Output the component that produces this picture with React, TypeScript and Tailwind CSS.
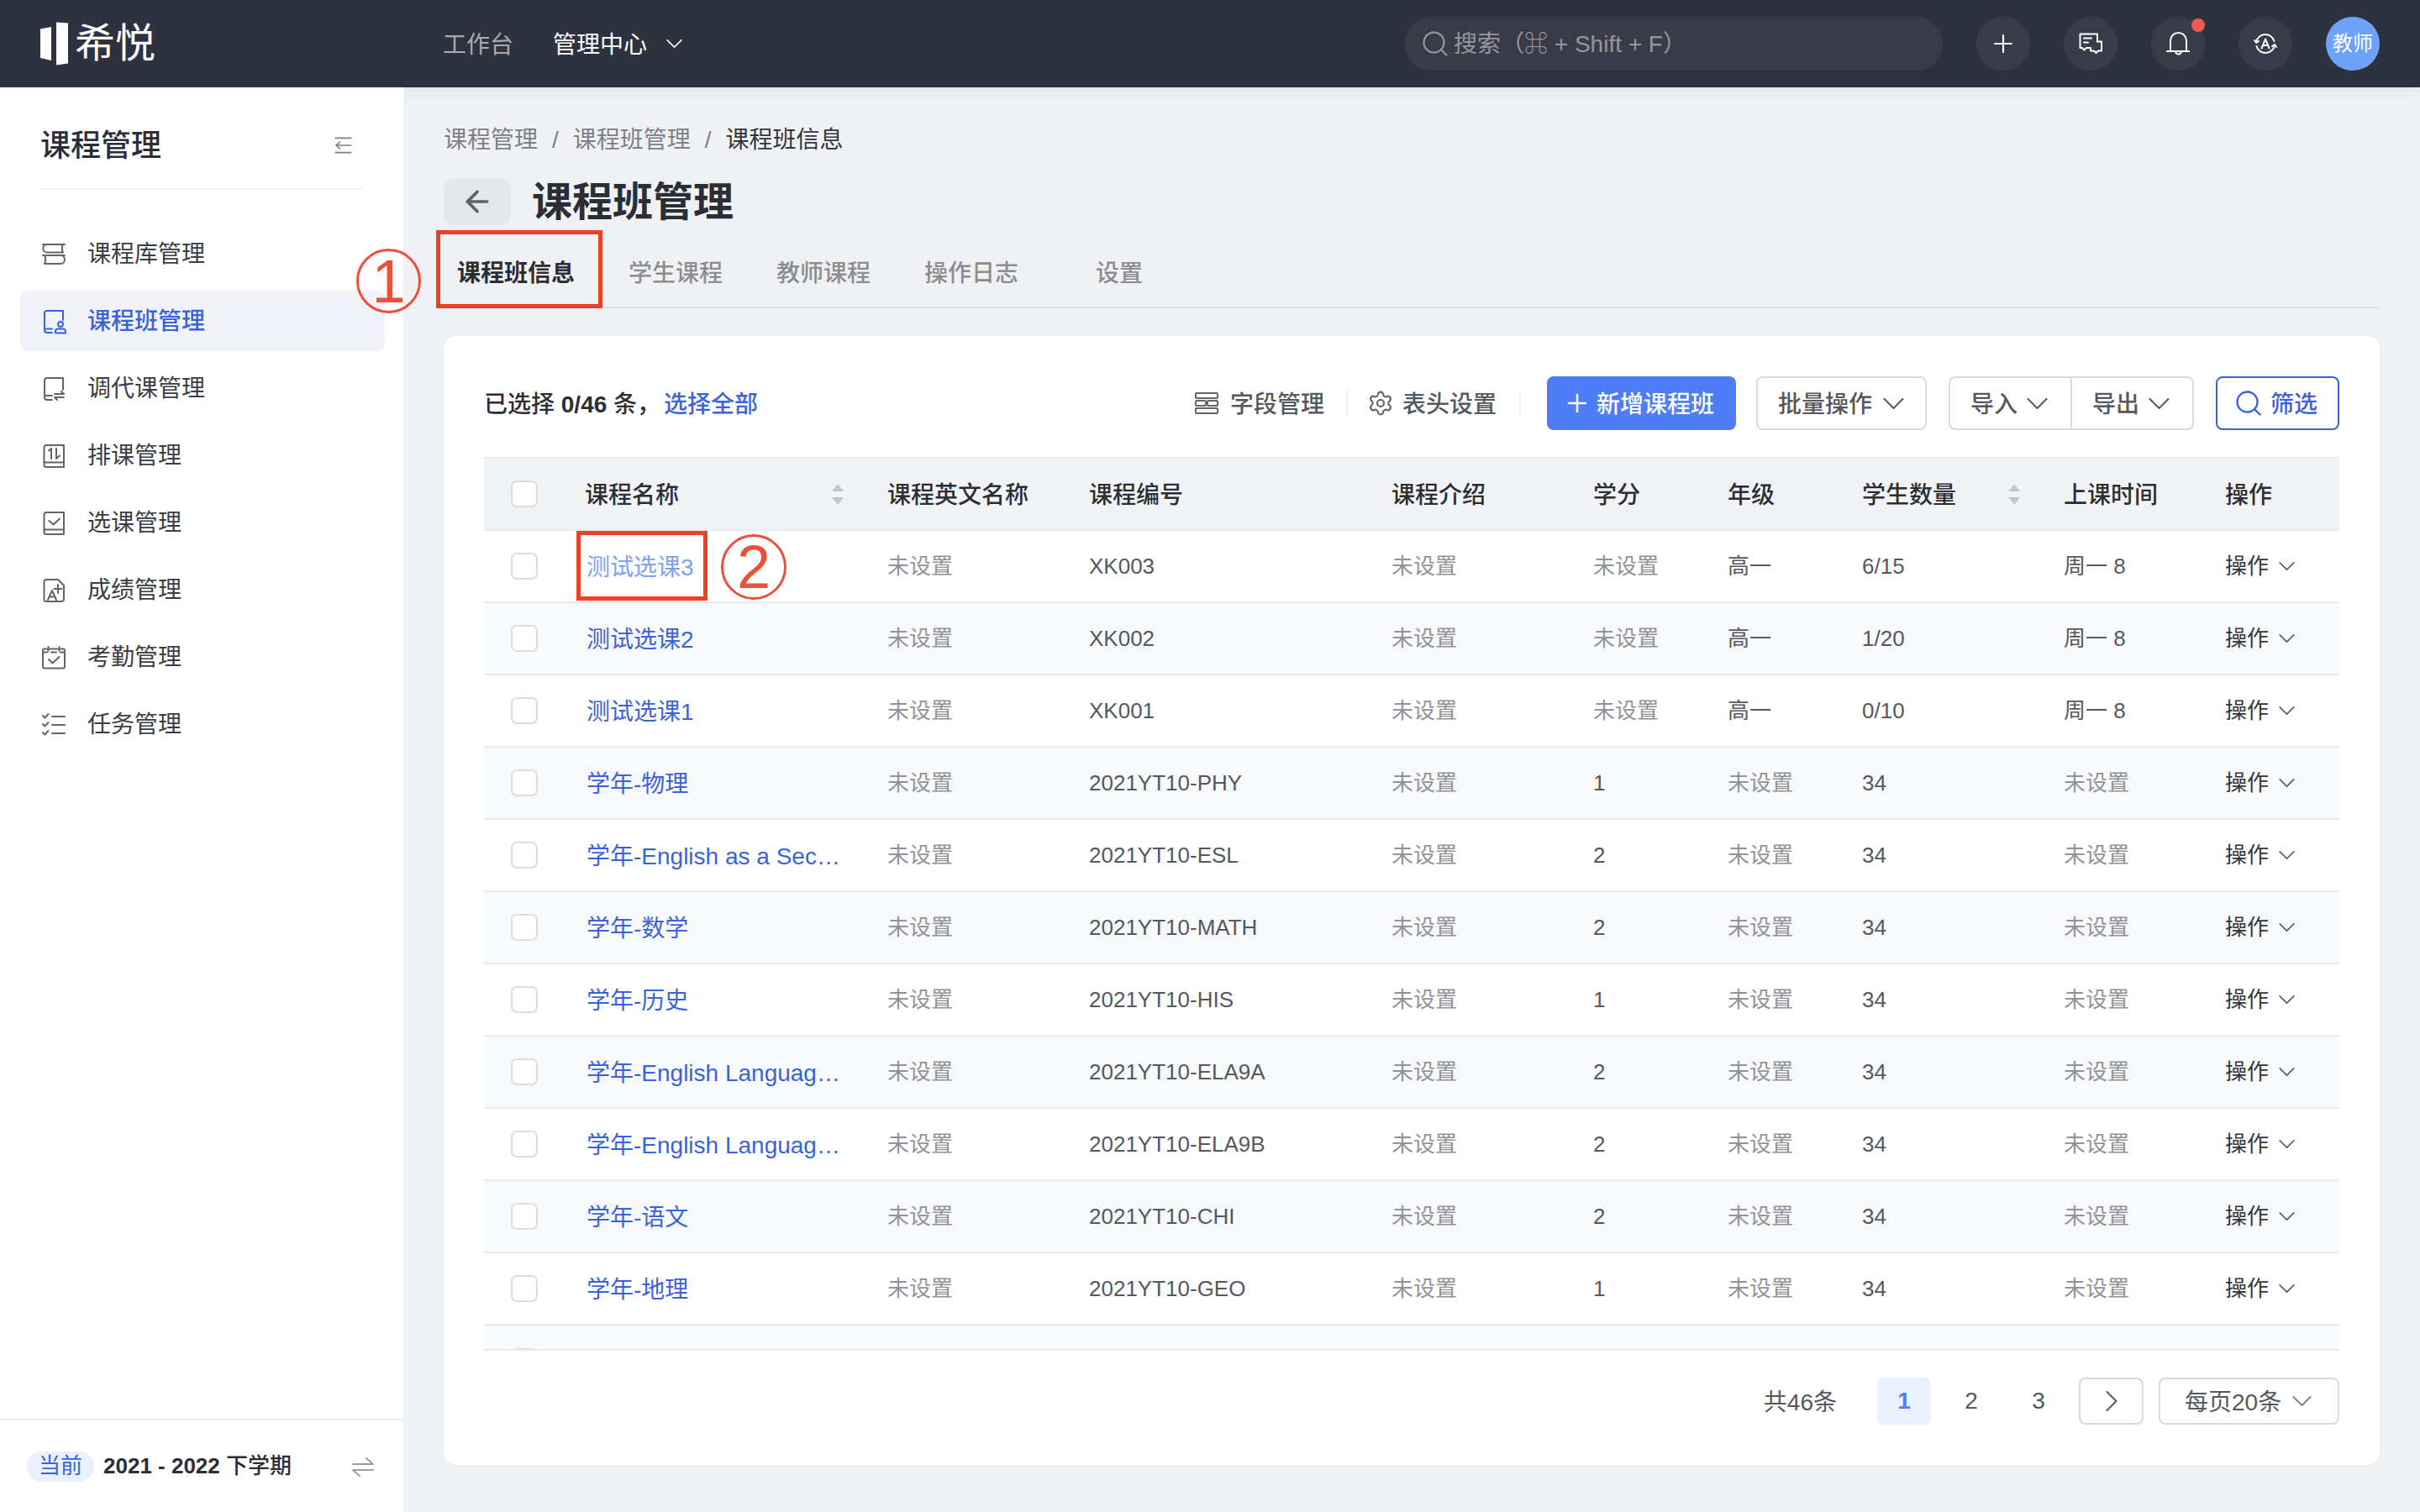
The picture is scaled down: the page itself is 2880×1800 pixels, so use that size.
import { ArrowLeft, Plus, Search, Settings } from 'lucide-react';

const font = "font-['Liberation_Sans','Noto_Sans_CJK_SC','DejaVu_Sans',sans-serif]";

type IconProps = { className?: string };

function Svg({ className, children }: IconProps & { children: React.ReactNode }) {
  return (
    <svg
      viewBox="0 0 28 28"
      fill="none"
      stroke="currentColor"
      strokeWidth="2"
      strokeLinecap="round"
      strokeLinejoin="round"
      className={className ?? 'w-7 h-7 shrink-0'}
    >
      {children}
    </svg>
  );
}

function Chevron({ className }: IconProps) {
  return (
    <svg viewBox="0 0 24 12" fill="none" stroke="currentColor" strokeWidth="2" strokeLinecap="round" strokeLinejoin="round" className={className} preserveAspectRatio="none">
      <path d="M1.500 1L12 11 22.500 1" />
    </svg>
  );
}

const StackIcon = (p: IconProps) => (
  <Svg {...p}>
    <path d="M1 2h26M25 2c-1.500 2-1.500 7 0 9.500H6a4.750 4.750 0 0 1 0-9.500" />
    <path d="M27 15H1M3 15c1.500 2 1.500 7 0 10h19a5 5 0 0 0 0-10" />
  </Svg>
);
const BookPerson = (p: IconProps) => (
  <Svg {...p}>
    <path d="M12 27H6a3 3 0 0 1-3-3V4a3 3 0 0 1 3-3h19v11" />
    <path d="M3 22.500h9" />
    <circle cx="22" cy="17" r="3" />
    <path d="M16 27.500v-2a3 3 0 0 1 3-3h6a3 3 0 0 1 3 3v2z" />
  </Svg>
);
const BookSwap = (p: IconProps) => (
  <Svg {...p}>
    <path d="M12 27H6a3 3 0 0 1-3-3V4a3 3 0 0 1 3-3h19v14" />
    <path d="M3 22h9" />
    <path d="M15 20h11l-3-3M26 24H15l3 3" />
  </Svg>
);
const BookArrows = (p: IconProps) => (
  <Svg {...p}>
    <path d="M5 1h21v26H5a2.500 2.500 0 0 1-2.500-2.500v-21A2.500 2.500 0 0 1 5 1z" />
    <path d="M2.500 21.500H26" />
    <path d="M8 7.500l3-2.500v12M17 5v12l4-3.500" />
  </Svg>
);
const BookCheck = (p: IconProps) => (
  <Svg {...p}>
    <path d="M5 1h21v26H5a2.500 2.500 0 0 1-2.500-2.500v-21A2.500 2.500 0 0 1 5 1z" />
    <path d="M2.500 21.500H26" />
    <path d="M8.500 11l5 4.500 7.500-7" />
  </Svg>
);
const DocGrade = (p: IconProps) => (
  <Svg {...p}>
    <path d="M19 1H5a2.500 2.500 0 0 0-2.500 2.500v21A2.500 2.500 0 0 0 5 27h18.500a2.500 2.500 0 0 0 2.500-2.500V8z" />
    <path d="M7 25l5-11 5 11M8.500 21.500h7" />
    <path d="M19 7v10M14.500 12h9" />
  </Svg>
);
const CalendarCheck = (p: IconProps) => (
  <Svg {...p}>
    <rect x="1" y="3.500" width="26" height="23" rx="2" />
    <path d="M7.500 1v5M20.500 1v5M1 7.500h5M11 7.500h6M22 7.500h5" />
    <path d="M8 16l4.500 4.500L20.500 13" />
  </Svg>
);
const CheckList = (p: IconProps) => (
  <Svg {...p}>
    <path d="M1 3l2.500 2.500L7.500 1M1 13l2.500 2.500 4-4.500M1 23l2.500 2.500 4-4.500" />
    <path d="M12 4h15M12 14h15M12 24h15" />
  </Svg>
);
const CollapseIcon = (p: IconProps) => (
  <Svg {...p}>
    <path d="M2 3h24M11 14h15M2 25h24M9 9l-6 5 6 5M3 14h8" />
  </Svg>
);
const FieldsIcon = (p: IconProps) => (
  <Svg {...p}>
    <rect x="1" y="2" width="26" height="6" rx="1" />
    <rect x="1" y="11" width="12" height="6" rx="1" />
    <rect x="15" y="11" width="12" height="6" rx="1" />
    <rect x="1" y="20" width="26" height="6" rx="1" />
  </Svg>
);
const SwitchIcon = (p: IconProps) => (
  <Svg {...p}>
    <path d="M2 11h24L18 4M26 18H2l8 7" />
  </Svg>
);
const ChatIcon = (p: IconProps) => (
  <Svg {...p}>
    <path d="M13 19H9l-2.500 2.500L4 19H1.500V2.500H22v9" />
    <path d="M6 7.500h9M6 12.500h5" />
    <path d="M22 11.500h5v11h-4l-2.500 2.500-2.500-2.500h-4V19" />
  </Svg>
);
const BellIcon = (p: IconProps) => (
  <Svg {...p}>
    <path d="M5 23V10.500a9.500 9.500 0 0 1 19 0V23M1 23h27M11 23a3.500 3.500 0 0 0 7 0" />
  </Svg>
);
const RoleIcon = (p: IconProps) => (
  <Svg {...p}>
    <path d="M3 12.500A11 11 0 0 1 24.500 11M25 15.500A11 11 0 0 1 3.500 17" />
    <path d="M1 10l2.200 3 3-2M27 18l-2-3-3 2" />
    <path d="M9.500 19.500L14 8.500l4.500 11M11 16h6" />
  </Svg>
);

function SortIcon() {
  return (
    <span className="flex flex-col gap-[7px] shrink-0">
      <span className="w-0 h-0 border-x-[7px] border-x-transparent border-b-[9px] border-b-[#c4c6ca]" />
      <span className="w-0 h-0 border-x-[7px] border-x-transparent border-t-[9px] border-t-[#c4c6ca]" />
    </span>
  );
}

function Checkbox() {
  return <span className="block w-8 h-8 rounded-[7px] border-2 border-[#dcdde0] bg-white" />;
}

const NAV = [
  { label: '课程库管理', Icon: StackIcon },
  { label: '课程班管理', Icon: BookPerson, active: true },
  { label: '调代课管理', Icon: BookSwap },
  { label: '排课管理', Icon: BookArrows },
  { label: '选课管理', Icon: BookCheck },
  { label: '成绩管理', Icon: DocGrade },
  { label: '考勤管理', Icon: CalendarCheck },
  { label: '任务管理', Icon: CheckList },
];

const TABS = ['学生课程', '教师课程', '操作日志'];

const COLUMNS = 'grid grid-cols-[96px_360px_240px_360px_240px_160px_160px_240px_192px_160px] items-center';

const NONE = '未设置';
const ROWS = [
  ['测试选课3', NONE, 'XK003', NONE, NONE, '高一', '6/15', '周一 8'],
  ['测试选课2', NONE, 'XK002', NONE, NONE, '高一', '1/20', '周一 8'],
  ['测试选课1', NONE, 'XK001', NONE, NONE, '高一', '0/10', '周一 8'],
  ['学年-物理', NONE, '2021YT10-PHY', NONE, '1', NONE, '34', NONE],
  ['学年-English as a Second Language', NONE, '2021YT10-ESL', NONE, '2', NONE, '34', NONE],
  ['学年-数学', NONE, '2021YT10-MATH', NONE, '2', NONE, '34', NONE],
  ['学年-历史', NONE, '2021YT10-HIS', NONE, '1', NONE, '34', NONE],
  ['学年-English Language Arts 9A', NONE, '2021YT10-ELA9A', NONE, '2', NONE, '34', NONE],
  ['学年-English Language Arts 9B', NONE, '2021YT10-ELA9B', NONE, '2', NONE, '34', NONE],
  ['学年-语文', NONE, '2021YT10-CHI', NONE, '2', NONE, '34', NONE],
  ['学年-地理', NONE, '2021YT10-GEO', NONE, '1', NONE, '34', NONE],
];

function Cell({ value }: { value: string }) {
  return (
    <div className={`pl-6 text-[26px] ${value === NONE ? 'text-[#929398]' : 'text-[#55585f]'}`}>{value}</div>
  );
}

function Logo() {
  return (
    <svg viewBox="0 0 34 52" className="w-[34px] h-[52px] shrink-0" fill="white">
      <path d="M0 8.500l13-2.500v40l-13-3z" />
      <path d="M19 0.500l14 1v48l-14 2z" />
    </svg>
  );
}

function Header() {
  return (
    <header className="relative z-10 h-[104px] shrink-0 bg-[#2e323e] flex items-center px-12 shadow-[0_4px_20px_rgba(0,0,0,0.05)]">
      <div className="flex items-center w-[479px] shrink-0">
        <Logo />
        <span className="ml-[7px] text-[48px] leading-none text-white">希悦</span>
      </div>
      <span className="pt-1 text-[28px] text-[#a9abb0]">工作台</span>
      <span className="pt-1 ml-[47px] text-[28px] text-white">管理中心</span>
      <Chevron className="ml-[23px] w-[19px] h-[10px] text-white" />
      <div className="ml-auto w-[640px] h-16 rounded-full bg-[#393c48] flex items-center pl-[18px] gap-[4px] text-[28px] text-[#96979c]">
        <Search className="w-9 h-9" strokeWidth={1.500} />
        <span className="pt-[2px]">搜索（⌘ + Shift + F）</span>
      </div>
      <div className="ml-10 flex items-center gap-10">
        <span className="w-16 h-16 rounded-full bg-[#393c48] flex items-center justify-center text-white">
          <Plus className="w-[34px] h-[34px]" strokeWidth={1.500} />
        </span>
        <span className="w-16 h-16 rounded-full bg-[#393c48] flex items-center justify-center text-white">
          <ChatIcon />
        </span>
        <span className="relative w-16 h-16 rounded-full bg-[#393c48] flex items-center justify-center text-white">
          <BellIcon />
          <span className="absolute right-0 top-[2px] w-4 h-4 rounded-full bg-[#f05a55]" />
        </span>
        <span className="w-16 h-16 rounded-full bg-[#393c48] flex items-center justify-center text-white">
          <RoleIcon />
        </span>
        <span className="w-16 h-16 rounded-full bg-[#6fa2fb] flex items-center justify-center text-white text-[24px]">
          教师
        </span>
      </div>
    </header>
  );
}

function Sidebar() {
  return (
    <aside className="relative z-20 w-[480px] shrink-0 bg-white flex flex-col">
      <div className="mx-12 h-[122px] pt-[46px] border-b-2 border-[#f1f2f4] flex justify-between items-start">
        <span className="text-[36px] leading-[48px] font-medium text-[#2b2e36]">课程管理</span>
        <CollapseIcon className="mt-[12px] mr-[10px] w-[27px] h-[22px] text-[#7c7f86]" />
      </div>
      <nav className="mt-[40px] ml-6 mr-[22px] flex flex-col gap-2">
        {NAV.map(({ label, Icon, active }) => (
          <div
            key={label}
            className={`h-[72px] rounded-lg flex items-center gap-[26px] pl-[26px] pt-[2px] text-[28px] ${
              active ? 'bg-[#f2f3f8] text-[#3a63db] font-medium' : 'text-[#3a3d45]'
            }`}
          >
            <Icon className={`w-7 h-7 shrink-0 overflow-visible ${active ? '' : 'text-[#62656c]'}`} />
            {label}
          </div>
        ))}
      </nav>
      <div className="mt-auto h-[111px] border-t-2 border-[#ecedef] flex items-center pl-8 pr-[34px]">
        <span className="w-20 h-9 rounded-full bg-[#eaf1fe] text-[#3a63db] text-[26px] flex items-center justify-center">当前</span>
        <span className="ml-[11px] text-[26px] font-medium text-[#2b2e36]">
          <span className="font-bold">2021 - 2022</span> 下学期
        </span>
        <SwitchIcon className="ml-auto w-[28px] h-[28px] text-[#9b9ea4]" />
      </div>
    </aside>
  );
}

function Toolbar() {
  return (
    <div className="flex items-center h-16 text-[28px]">
      <span className="pt-1 font-medium text-[#2b2e36]">
        已选择 <span className="font-bold">0/46</span> 条，
      </span>
      <span className="pt-1 ml-1 font-medium text-[#3a63db]">选择全部</span>
      <div className="ml-auto flex items-center text-[#55585f]">
        <FieldsIcon className="w-7 h-7 text-[#62656c]" />
        <span className="pt-1 ml-[14px] font-medium">字段管理</span>
        <span className="ml-[26px] w-[2px] h-8 bg-[#eeeff1]" />
        <Settings className="ml-[23px] w-8 h-8 text-[#62656c]" strokeWidth={1.600} />
        <span className="pt-1 ml-[10px] font-medium">表头设置</span>
        <span className="ml-[27px] w-[2px] h-8 bg-[#eeeff1]" />
        <button className="ml-[31px] w-[225px] h-16 pl-[19px] rounded-lg bg-[#4e7df7] text-white font-medium flex items-center gap-[6px]">
          <Plus className="w-[34px] h-[34px]" strokeWidth={1.800} />
          <span className="pt-1">新增课程班</span>
        </button>
        <button className="ml-6 w-[203px] h-16 pl-6 rounded-lg border-2 border-[#d9dadd] font-medium flex items-center gap-[13px]">
          <span className="pt-1">批量操作</span>
          <Chevron className="w-[25px] h-[13px]" />
        </button>
        <div className="ml-[26px] w-[292px] h-16 rounded-lg border-2 border-[#d9dadd] font-medium flex items-center divide-x-2 divide-[#d9dadd]">
          <span className="h-full flex-1 pl-6 flex items-center gap-[11px]">
            <span className="pt-1">导入</span>
            <Chevron className="w-[25px] h-[13px]" />
          </span>
          <span className="h-full flex-1 pl-6 flex items-center gap-[11px]">
            <span className="pt-1">导出</span>
            <Chevron className="w-[25px] h-[13px]" />
          </span>
        </div>
        <button className="ml-[26px] w-[147px] h-16 pl-[19px] rounded-lg border-2 border-[#3a63db] text-[#3a63db] font-medium flex items-center gap-[8px]">
          <Search className="w-9 h-9" strokeWidth={1.600} />
          <span className="pt-1">筛选</span>
        </button>
      </div>
    </div>
  );
}

function CourseTable() {
  return (
    <div className="mt-8">
      <div className={`${COLUMNS} h-[88px] bg-[#f2f3f7] border-y-2 border-[#e9eaec] text-[28px] font-medium text-[#2b2e36]`}>
        <div className="pl-8">
          <Checkbox />
        </div>
        <div className="pl-6 pr-[28px] flex items-center justify-between">
          <span className="pt-1">课程名称</span>
          <SortIcon />
        </div>
        <div className="pl-6 pt-1">课程英文名称</div>
        <div className="pl-6 pt-1">课程编号</div>
        <div className="pl-6 pt-1">课程介绍</div>
        <div className="pl-6 pt-1">学分</div>
        <div className="pl-6 pt-1">年级</div>
        <div className="pl-6 pr-[28px] flex items-center justify-between">
          <span className="pt-1">学生数量</span>
          <SortIcon />
        </div>
        <div className="pl-6 pt-1">上课时间</div>
        <div className="pl-6 pt-1">操作</div>
      </div>
      <div className="h-[976px] overflow-hidden border-b-2 border-[#e9eaec]">
        {ROWS.map((row, i) => (
          <div
            key={row[2]}
            className={`${COLUMNS} h-[86px] border-b-2 border-[#e9eaec] ${i % 2 === 1 ? 'bg-[#f8f9fb]' : 'bg-white'}`}
          >
            <div className="pl-8">
              <Checkbox />
            </div>
            <div className={`pl-[26px] pr-[32px] pt-[3px] truncate text-[28px] ${i === 0 ? 'text-[#7ba2f5]' : 'text-[#3a63db]'}`}>
              {row[0]}
            </div>
            {row.slice(1).map((value, j) => (
              <Cell key={j} value={value} />
            ))}
            <div className="pl-6 flex items-center gap-[12px] text-[26px] text-[#33363d]">
              操作
              <Chevron className="w-[19px] h-[10px] text-[#55585f]" />
            </div>
          </div>
        ))}
        <div className={`${COLUMNS} h-[86px] bg-[#f8f9fb]`}>
          <div className="pl-8">
            <Checkbox />
          </div>
        </div>
      </div>
    </div>
  );
}

function Pagination() {
  return (
    <div className="mt-[32px] flex items-center justify-end text-[28px] text-[#55585f]">
      <span className="pt-[3px]">共46条</span>
      <span className="ml-12 w-16 h-14 rounded-lg bg-[#eaf1fe] text-[#4e7df7] font-bold flex items-center justify-center">1</span>
      <span className="ml-4 w-16 h-14 flex items-center justify-center">2</span>
      <span className="ml-4 w-16 h-14 flex items-center justify-center">3</span>
      <span className="ml-4 w-[77px] h-14 rounded-lg border-2 border-[#d9dadd] flex items-center justify-center">
        <svg viewBox="0 0 14 24" fill="none" stroke="currentColor" strokeWidth="2" strokeLinecap="round" strokeLinejoin="round" className="w-[14px] h-6">
          <path d="M1.500 1L12.500 12 1.500 23" />
        </svg>
      </span>
      <span className="ml-[18px] w-[215px] h-14 pl-[29px] rounded-lg border-2 border-[#d9dadd] flex items-center gap-[13px]">
        <span className="pt-[3px]">每页20条</span>
        <Chevron className="w-[23px] h-[12px] text-[#7c7f86]" />
      </span>
    </div>
  );
}

export default function App() {
  return (
    <div className={`relative w-[2880px] h-[1800px] overflow-hidden flex flex-col bg-[#f0f1f5] ${font}`}>
      <Header />
      <div className="flex-1 flex min-h-0">
        <Sidebar />
        <main className="flex-1 min-w-0 px-12">
          <div className="pt-[45px] h-[81px] flex items-center gap-[17px] text-[28px] leading-10 text-[#7d8086]">
            <span>课程管理</span>
            <span>/</span>
            <span>课程班管理</span>
            <span>/</span>
            <span className="text-[#33363d]">课程班信息</span>
          </div>
          <div className="mt-[27px] h-14 flex items-center">
            <span className="w-20 h-14 rounded-xl bg-[#e6e7eb] flex items-center justify-center text-[#5f626a]">
              <ArrowLeft className="w-10 h-10" strokeWidth={2.200} />
            </span>
            <h1 className="ml-[25px] pt-[2px] text-[48px] font-bold text-[#2b2e36]">课程班管理</h1>
          </div>
          <div className="h-[99px] border-b-2 border-[#e0e1e5] flex gap-8 text-[28px] font-medium text-[#8b8d92]">
            <div className="relative px-4 pt-[37px] font-bold text-[#2b2e36]">
              课程班信息
              <span className="absolute left-0 right-0 bottom-[-2px] h-1 bg-[#3a63db]" />
            </div>
            {TABS.map((tab) => (
              <div key={tab} className="px-4 pt-[37px]">
                {tab}
              </div>
            ))}
            <div className="ml-[28px] px-4 pt-[37px]">设置</div>
          </div>
          <section className="mt-[33px] h-[1344px] rounded-2xl bg-white px-12 pt-12">
            <Toolbar />
            <CourseTable />
            <Pagination />
          </section>
        </main>
      </div>

      {/* annotations drawn over the screenshot */}
      <div className="absolute z-30 left-[519px] top-[274px] w-[198px] h-[93px] border-[5px] border-[#ee4023]" />
      <div className="absolute z-30 left-[424px] top-[296px] w-[77px] h-[77px] rounded-full border-[3px] border-[#ee4f3a] flex items-center justify-center text-[72px] leading-none text-[#ee4f3a]">
        1
      </div>
      <div className="absolute z-30 left-[686px] top-[632px] w-[156px] h-[83px] border-[5px] border-[#ee4023]" />
      <div className="absolute z-30 left-[858px] top-[636px] w-[78px] h-[78px] rounded-full border-[3px] border-[#ee4f3a] flex items-center justify-center text-[72px] leading-none text-[#ee4f3a]">
        2
      </div>
    </div>
  );
}
